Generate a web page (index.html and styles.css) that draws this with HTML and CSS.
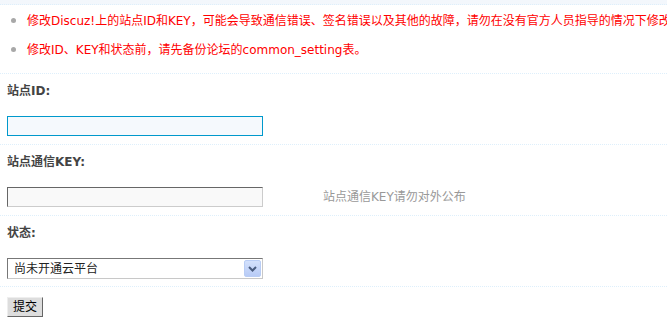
FILE: index.html
```html
<!DOCTYPE html>
<html lang="zh-CN">
<head>
<meta charset="utf-8">
<title>站点设置</title>
<link rel="stylesheet" href="styles.css">
</head>
<body>
<div class="strip"></div>
<ul class="tips">
  <li>修改Discuz!上的站点ID和KEY，可能会导致通信错误、签名错误以及其他的故障，请勿在没有官方人员指导的情况下修改</li>
  <li>修改ID、KEY和状态前，请先备份论坛的common_setting表。</li>
</ul>
<form class="form">
  <div class="section">
    <div class="label">站点ID:</div>
    <div class="field"><input class="txt focus" type="text"></div>
  </div>
  <div class="section">
    <div class="label">站点通信KEY:</div>
    <div class="field">
      <input class="txt" type="text">
      <span class="hint">站点通信KEY请勿对外公布</span>
    </div>
  </div>
  <div class="section sel-section">
    <div class="label">状态:</div>
    <div class="field">
      <div class="select-wrap">
        <select class="sel"><option>尚未开通云平台</option></select>
        <span class="arrow"><svg width="9" height="6" viewBox="0 0 9 6"><path d="M1 1 L4.5 4.5 L8 1" fill="none" stroke="#4a5d80" stroke-width="2"/></svg></span>
      </div>
    </div>
  </div>
  <div class="submit-row">
    <button class="btn" type="button">提交</button>
  </div>
</form>
</body>
</html>
```

FILE: styles.css
```css
html, body {
  margin: 0;
  padding: 0;
  background: #fff;
  overflow: hidden;
}
body {
  font: 12px/18px "DejaVu Sans", "Noto Sans CJK SC", sans-serif;
  color: #333;
  width: 667px;
}
.strip {
  height: 4px;
  background: #f3f7fc;
  border-bottom: 1px dotted #deeffb;
}
.tips {
  list-style: none;
  margin: 0;
  padding: 1px 0 9px 11px;
  border-bottom: 1px dotted #deeffb;
  white-space: nowrap;
}
.tips li {
  display: flex;
  align-items: center;
  height: 29px;
  color: #f00;
}
.tips li::before {
  content: "";
  width: 5px;
  height: 5px;
  border-radius: 50%;
  background: #a8a8a8;
  margin-right: 11px;
  flex: none;
}
.section {
  display: flex;
  flex-direction: column;
  gap: 16px;
  padding: 8px 7px;
  border-bottom: 1px dotted #deeffb;
}
.label {
  font-weight: bold;
  color: #444;
  line-height: 18px;
}
.field {
  display: flex;
  align-items: center;
  height: 20px;
}
.txt {
  box-sizing: border-box;
  width: 256px;
  height: 20px;
  margin: 0;
  padding: 1px 3px;
  border: 1px solid;
  border-color: #666 #ccc #ccc #666;
  background: #f9f9f9;
  font: 12px "DejaVu Sans", "Noto Sans CJK SC", sans-serif;
  outline: none;
}
.txt.focus {
  border-color: #09c;
  background: #f5f9fd;
}
.hint {
  margin-left: 60px;
  color: #999;
}
.sel-section {
  padding-bottom: 7px;
}
.sel-section .field {
  height: 21px;
}
.select-wrap {
  position: relative;
  width: 256px;
  height: 21px;
}
.sel {
  appearance: none;
  -webkit-appearance: none;
  box-sizing: border-box;
  width: 256px;
  height: 21px;
  margin: 0;
  padding: 0 0 0 6px;
  border: 1px solid;
  border-color: #777 #c8c8c8 #c8c8c8 #777;
  border-radius: 0;
  background: #fff;
  color: #222;
  font: 12px "DejaVu Sans", "Noto Sans CJK SC", sans-serif;
  outline: none;
}
.arrow {
  position: absolute;
  right: 2px;
  top: 2px;
  width: 15px;
  height: 15px;
  border: 1px solid #b9cdf5;
  border-radius: 2px;
  background: linear-gradient(#d3e1fc, #b8cbf6);
  display: flex;
  align-items: center;
  justify-content: center;
}
.submit-row {
  padding: 10px 7px 0;
}
.btn {
  box-sizing: border-box;
  height: 20px;
  width: 36px;
  margin: 0;
  padding: 0 5px;
  border: 1px solid;
  border-color: #eee #666 #666 #eee;
  background: #ddd;
  color: #000;
  font: 12px/18px "DejaVu Sans", "Noto Sans CJK SC", sans-serif;
  border-radius: 0;
}
```
